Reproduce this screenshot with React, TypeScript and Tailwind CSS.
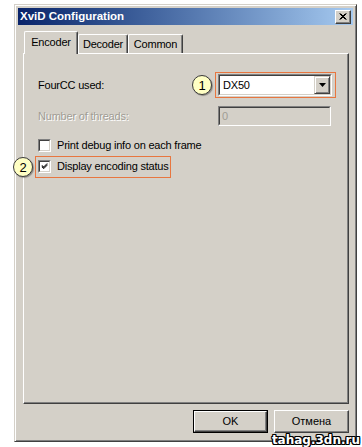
import React from 'react'

const font = { fontFamily: '"Liberation Sans", Arial, sans-serif' }

function Sunken({ className = '', children }: { className?: string; children?: React.ReactNode }) {
  return (
    <div className={`border border-t-[#808080] border-l-[#808080] border-r-white border-b-white ${className}`}>
      <div className="w-full h-full border border-t-[#404040] border-l-[#404040] border-r-[#d4d0c8] border-b-[#d4d0c8] flex items-center">
        {children}
      </div>
    </div>
  )
}

function CheckBox({ checked, label }: { checked?: boolean; label: string }) {
  return (
    <div className="flex items-center h-[13px]">
      <Sunken className="w-[13px] h-[13px] bg-white">
        {checked && (
          <svg width="9" height="9" viewBox="0 0 9 9" className="ml-px">
            <path d="M1 4 L3 6 L7 2 M1 5 L3 7 L7 3 M1 3 L3 5 L7 1" stroke="#000" strokeWidth="1" fill="none" />
          </svg>
        )}
      </Sunken>
      <span className="ml-[6px] text-[11px] tracking-[-0.2px] text-black leading-none">{label}</span>
    </div>
  )
}

function Badge({ n, className }: { n: string; className: string }) {
  return (
    <div
      className={`absolute w-[20px] h-[20px] rounded-full bg-[#ffffc4] border-[1.5px] border-[#3a3a3a] shadow-[1px_1px_1px_rgba(0,0,0,0.35)] flex items-center justify-center text-[13px] text-black leading-none ${className}`}
    >
      {n}
    </div>
  )
}

export default function App() {
  return (
    <div className="relative w-[362px] h-[447px] bg-white overflow-hidden" style={font}>
      {/* dialog window */}
      <div className="ml-[14px] mt-[4px] w-[343px] h-[438px] bg-[#d4d0c8] border border-t-[#d4d0c8] border-l-[#d4d0c8] border-r-[#404040] border-b-[#404040] shadow-[inset_1px_1px_#fff,inset_-1px_-1px_#808080] p-[3px] flex flex-col">
        {/* title bar */}
        <div className="h-[17px] bg-linear-to-r from-[#0a246a] to-[#a6caf0] flex items-center justify-between pl-[2px] pr-[2px]">
          <span className="text-white font-bold text-[11.5px] leading-none">XviD Configuration</span>
          <div className="w-[16px] h-[14px] bg-[#d4d0c8] border border-t-white border-l-white border-r-[#404040] border-b-[#404040] shadow-[inset_-1px_-1px_#808080] flex items-center justify-center">
            <svg width="8" height="7" viewBox="0 0 8 7">
              <path d="M0.5 0.5 L6.5 6.5 M1.5 0.5 L7.5 6.5 M6.5 0.5 L0.5 6.5 M7.5 0.5 L1.5 6.5" stroke="#000" strokeWidth="1" />
            </svg>
          </div>
        </div>

        {/* tabs */}
        <div className="mt-[6px] ml-[5px] h-[22px] flex items-end">
          <div className="relative z-10 -mb-px ml-px w-[54px] h-[23px] bg-[#d4d0c8] border-t border-l border-t-white border-l-white border-r border-r-[#404040] shadow-[inset_-1px_0_#808080] rounded-t-[2px] flex items-center justify-center pb-[1px]">
            <span className="text-[11px] tracking-[-0.2px] text-black leading-none">Encoder</span>
          </div>
          <div className="w-[50px] h-[19px] border-t border-l border-t-white border-l-white border-r border-r-[#404040] shadow-[inset_-1px_0_#808080] rounded-t-[2px] flex items-center justify-center">
            <span className="text-[11px] tracking-[-0.2px] text-black leading-none">Decoder</span>
          </div>
          <div className="w-[55px] h-[19px] border-t border-l border-t-white border-l-white border-r border-r-[#404040] shadow-[inset_-1px_0_#808080] rounded-t-[2px] flex items-center justify-center">
            <span className="text-[11px] tracking-[-0.2px] text-black leading-none">Common</span>
          </div>
        </div>

        {/* tab page */}
        <div className="ml-[5px] w-[326px] h-[351px] border border-t-white border-l-white border-r-[#404040] border-b-[#404040] shadow-[inset_-1px_-1px_#808080] pt-[20px] pl-[14px] pr-[16px] flex flex-col">
          <div className="flex items-center justify-between h-[22px]">
            <span className="text-[11px] tracking-[-0.2px] text-black leading-none">FourCC used:</span>
            <Sunken className="w-[114px] h-[22px] bg-white">
              <span className="flex-1 pl-[3px] text-[11px] tracking-[-0.2px] text-black leading-none">DX50</span>
              <div className="w-[16px] h-[18px] mr-0 bg-[#d4d0c8] border border-t-[#d4d0c8] border-l-[#d4d0c8] border-r-[#404040] border-b-[#404040] shadow-[inset_1px_1px_#fff,inset_-1px_-1px_#808080] flex items-center justify-center">
                <svg width="7" height="4" viewBox="0 0 7 4">
                  <path d="M0 0 H7 L3.5 4 Z" fill="#000" />
                </svg>
              </div>
            </Sunken>
          </div>

          <div className="mt-[10px] flex items-center justify-between h-[20px]">
            <span className="text-[11px] tracking-[-0.2px] text-[#a09c94] leading-none [text-shadow:1px_1px_0_#fff]">Number of threads:</span>
            <Sunken className="w-[113px] h-[20px] bg-[#d4d0c8] mr-px">
              <span className="pl-[2px] text-[11px] text-[#a09c94] leading-none">0</span>
            </Sunken>
          </div>

          <div className="mt-[13px] flex flex-col gap-[8px]">
            <CheckBox label="Print debug info on each frame" />
            <CheckBox checked label="Display encoding status" />
          </div>
        </div>

        {/* buttons */}
        <div className="mt-[6px] mr-[4px] flex justify-end gap-[6px]">
          <div className="w-[75px] h-[23px] border border-black">
            <div className="w-full h-full border border-t-white border-l-white border-r-[#404040] border-b-[#404040] shadow-[inset_-1px_-1px_#808080] flex items-center justify-center">
              <span className="text-[11px] text-black leading-none">OK</span>
            </div>
          </div>
          <div className="w-[75px] h-[23px] border border-t-white border-l-white border-r-[#404040] border-b-[#404040] shadow-[inset_-1px_-1px_#808080] flex items-center justify-center">
            <span className="text-[11px] text-black leading-none">Отмена</span>
          </div>
        </div>
      </div>

      {/* annotations */}
      <div className="absolute left-[215px] top-[72px] w-[121px] h-[26px] border-[1.5px] border-[#e8763f]" />
      <div className="absolute left-[35px] top-[156px] w-[136px] h-[22px] border-[1.5px] border-[#e8763f]" />
      <Badge n="1" className="left-[192px] top-[75px]" />
      <Badge n="2" className="left-[13px] top-[157px]" />

      {/* watermark */}
      <div
        className="absolute right-[2px] bottom-[1px] text-white font-bold text-[12px] leading-none [text-shadow:1px_1px_0_#000,-1px_-1px_0_#000,1px_-1px_0_#000,-1px_1px_0_#000,0_1px_0_#000,0_-1px_0_#000,1px_0_0_#000,-1px_0_0_#000]"
        style={{ fontFamily: '"DejaVu Sans", Verdana, sans-serif' }}
      >
        tahag.3dn.ru
      </div>
    </div>
  )
}
